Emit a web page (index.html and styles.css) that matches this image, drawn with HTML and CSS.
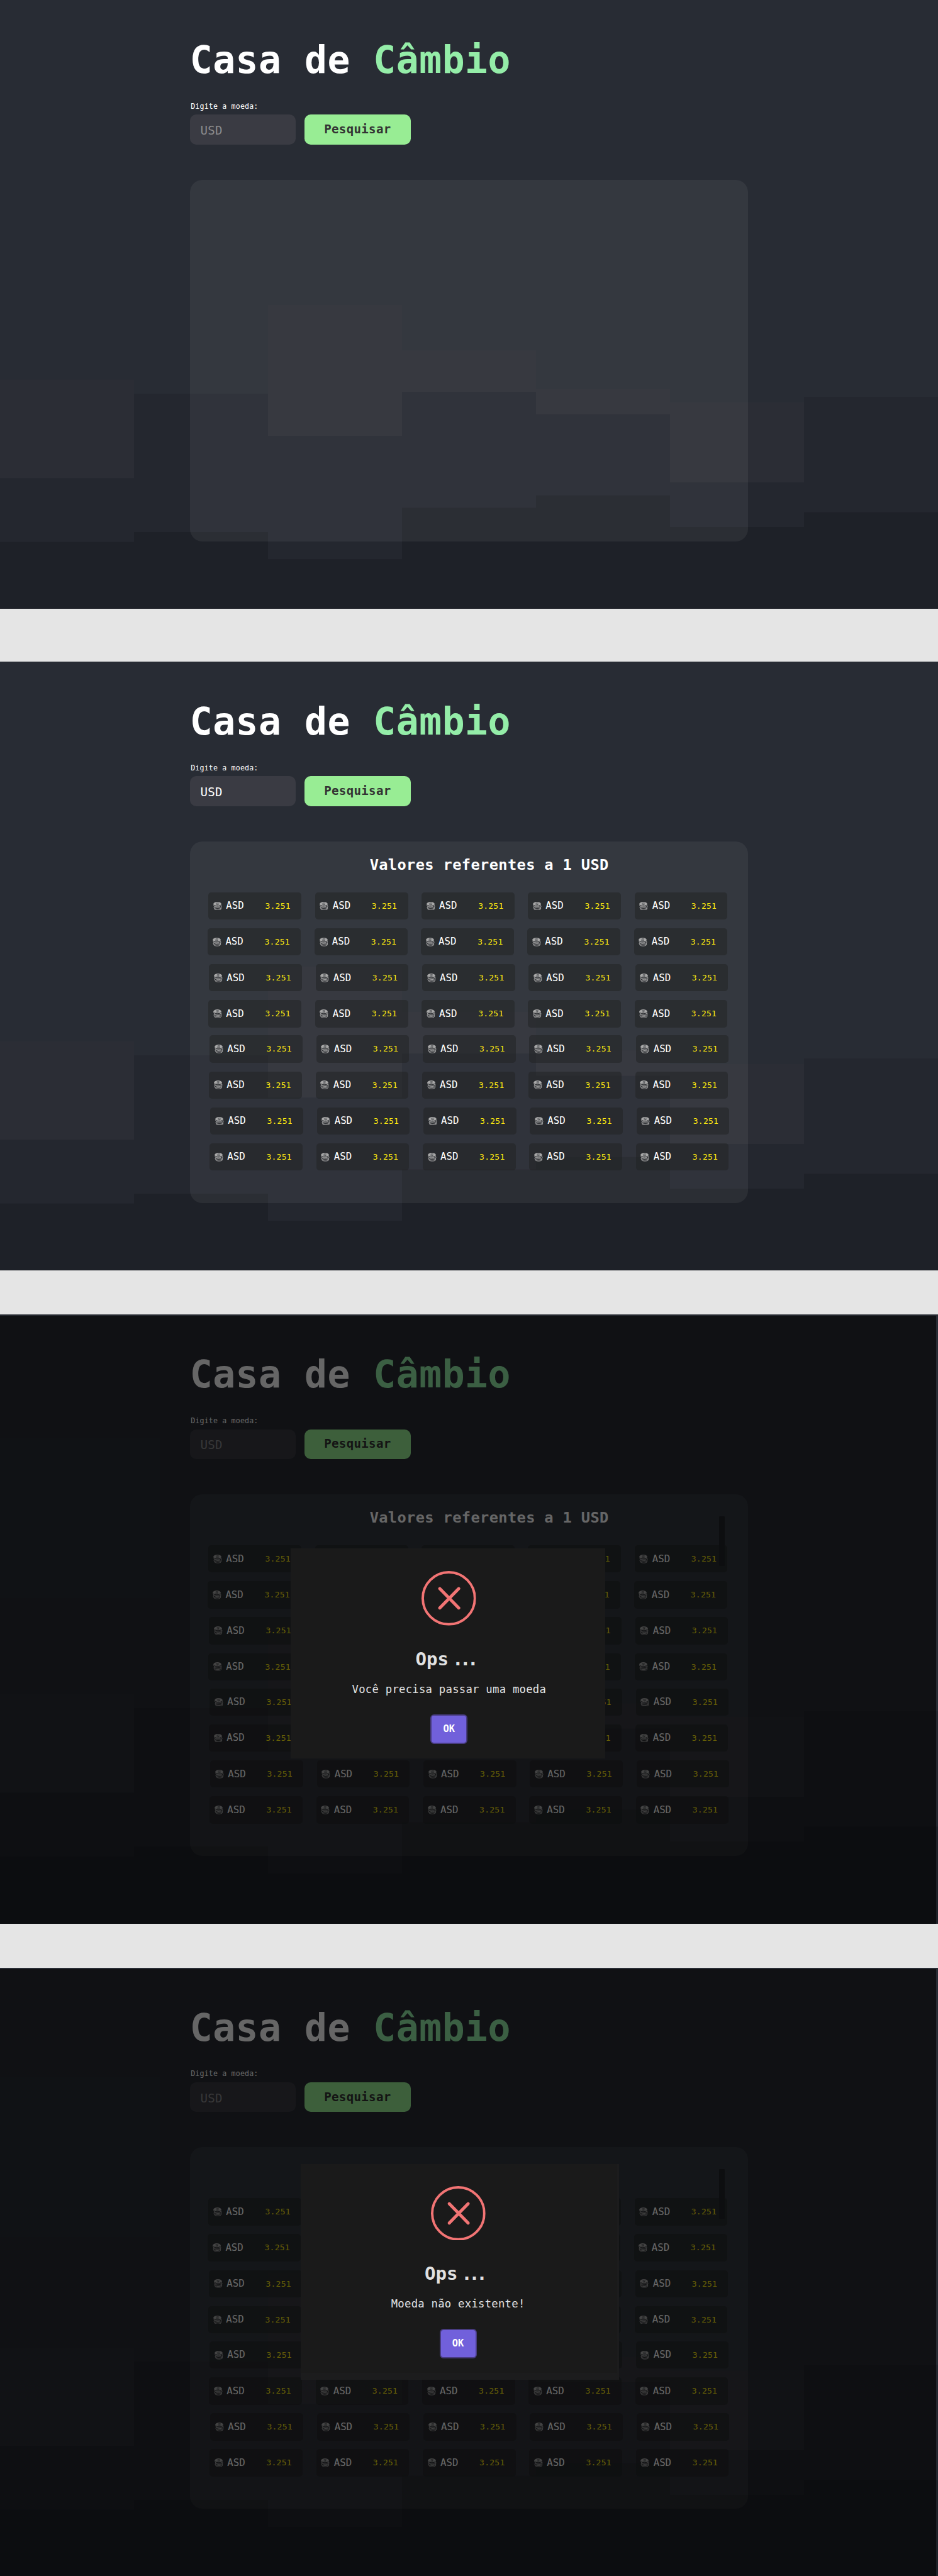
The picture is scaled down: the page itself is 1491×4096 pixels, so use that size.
FILE: index.html
```html
<!DOCTYPE html>
<html lang="pt-BR">
<head>
<meta charset="utf-8">
<title>Casa de Câmbio</title>
<link rel="stylesheet" href="styles.css">
</head>
<body>
<svg class="defs" aria-hidden="true">
  <symbol id="steps" viewBox="0 0 1512 982" preserveAspectRatio="none">
    <path fill="#2b2d35" d="M0 612H216V635H432V492H648V565H864V627H1080V649H1296V982H0Z"/>
    <path fill="#24272f" d="M0 771H216V635H432V703H648V632H864V668H1080V778H1296V640H1512V982H0Z"/>
    <path fill="#1e2128" d="M0 874H216V858H432V902H648V819H864V799H1080V850H1296V826H1512V982H0Z"/>
  </symbol>
  <symbol id="coins" viewBox="0 0 14 14">
    <g fill="#2b2d31" stroke="#a8a8a8" stroke-width="1">
      <ellipse cx="7.3" cy="11" rx="5.6" ry="2.5"/>
      <ellipse cx="7" cy="9.2" rx="6" ry="2.5"/>
      <ellipse cx="7.6" cy="7.2" rx="5.8" ry="2.5"/>
      <ellipse cx="6.6" cy="5.3" rx="5.9" ry="2.6"/>
    </g>
    <ellipse cx="6.6" cy="3.2" rx="6.3" ry="3.1" fill="#a8a8a8"/>
    <path d="M9 2.1C7.6 1.3 4.8 1.5 4.9 2.5C5 3.5 8.7 3 8.7 4.1C8.7 5.1 5.8 5.2 4.4 4.4" fill="none" stroke="#3a3c40" stroke-width="0.8"/>
  </symbol>
  <symbol id="error" viewBox="0 0 88 88">
    <g fill="none" stroke="#f27474">
      <circle cx="44" cy="44" r="42" stroke-width="4"/>
      <path d="M29.5 28.5L60 59.5M60 28.5L29.5 59.5" stroke-width="5" stroke-linecap="round"/>
    </g>
  </symbol>
</svg>

<main class="board">
  <section class="screen">
    <svg class="screen__steps"><use href="#steps"/></svg>
    <div class="content">
      <h1 class="title">Casa de <span class="title__accent">Câmbio</span></h1>
      <label class="label">Digite a moeda:</label>
      <form class="search">
        <input class="search__input" type="text" placeholder="USD">
        <button class="search__button" type="button">Pesquisar</button>
      </form>
      <div class="panel"></div>
    </div>
  </section>

  <section class="screen screen--results">
    <svg class="screen__steps"><use href="#steps"/></svg>
    <div class="content">
      <h1 class="title">Casa de <span class="title__accent">Câmbio</span></h1>
      <label class="label">Digite a moeda:</label>
      <form class="search">
        <input class="search__input" type="text" value="USD">
        <button class="search__button" type="button">Pesquisar</button>
      </form>
      <div class="panel">
        <h2 class="panel__title">Valores referentes a 1 USD</h2>
        <div class="rates"></div>
      </div>
    </div>
  </section>

  <section class="screen screen--empty">
    <svg class="screen__steps"><use href="#steps"/></svg>
    <div class="content">
      <h1 class="title">Casa de <span class="title__accent">Câmbio</span></h1>
      <label class="label">Digite a moeda:</label>
      <form class="search">
        <input class="search__input" type="text" placeholder="USD">
        <button class="search__button" type="button">Pesquisar</button>
      </form>
      <div class="panel">
        <h2 class="panel__title">Valores referentes a 1 USD</h2>
        <div class="rates" data-covered-rows="6"></div>
        <div class="panel__scrollbar"></div>
      </div>
    </div>
    <div class="overlay"></div>
    <div class="modal modal--empty">
      <svg class="modal__icon"><use href="#error"/></svg>
      <h3 class="modal__title"><span>Ops</span><span class="modal__dots">...</span></h3>
      <p class="modal__text">Você precisa passar uma moeda</p>
      <button class="modal__button" type="button">OK</button>
    </div>
  </section>

  <section class="screen screen--missing">
    <svg class="screen__steps"><use href="#steps"/></svg>
    <div class="content">
      <h1 class="title">Casa de <span class="title__accent">Câmbio</span></h1>
      <label class="label">Digite a moeda:</label>
      <form class="search">
        <input class="search__input" type="text" placeholder="USD">
        <button class="search__button" type="button">Pesquisar</button>
      </form>
      <div class="panel">
        <div class="panel__title"></div>
        <div class="rates" data-covered-rows="5"></div>
        <div class="panel__scrollbar"></div>
      </div>
    </div>
    <div class="overlay"></div>
    <div class="modal modal--missing">
      <svg class="modal__icon"><use href="#error"/></svg>
      <h3 class="modal__title"><span>Ops</span><span class="modal__dots">...</span></h3>
      <p class="modal__text">Moeda não existente!</p>
      <button class="modal__button" type="button">OK</button>
    </div>
  </section>
</main>
<script src="script.js"></script>
</body>
</html>
```
FILE: styles.css
```css
* {
  box-sizing: border-box;
  margin: 0;
  padding: 0;
}

html {
  background: #1e2128;
}

body {
  height: 4096px;
  overflow: hidden;
  font-family: "DejaVu Sans Mono", monospace;
  color: #fff;
}

.defs {
  position: absolute;
  width: 0;
  height: 0;
}

.board {
  zoom: 0.986;
  background: #e5e5e5;
}

.screen {
  position: relative;
  height: 982px;
  overflow: hidden;
  background: #282c34;
}

.screen--results {
  margin-top: 85px;
}

.screen--empty,
.screen--missing {
  margin-top: 71px;
}

.screen__steps {
  position: absolute;
  inset: 0;
  width: 100%;
  height: 100%;
}

.content {
  position: relative;
  width: 900px;
  margin-left: 306px;
  padding-top: 62px;
}

.title {
  font-size: 60.5px;
  line-height: 70px;
  letter-spacing: 0.55px;
  white-space: nowrap;
}

.title__accent {
  color: #94eda8;
}

.label {
  display: block;
  margin: 33px 0 6px 1.5px;
  font-size: 11.8px;
  line-height: 14px;
  letter-spacing: 0.16px;
}

.search {
  display: flex;
  gap: 14px;
}

.search__input,
.search__button {
  width: 171px;
  height: 48px;
  border: 0;
  border-radius: 10px;
  font-family: inherit;
  font-size: 19.4px;
  letter-spacing: 0.32px;
}

.search__input {
  padding: 3px 16px 0 17px;
  background: #3a3b43;
  color: #fff;
}

.search__input::placeholder {
  color: #8b8b8d;
  opacity: 1;
}

.search__button {
  padding-bottom: 1px;
  background: #98ed94;
  color: #333;
  font-weight: 700;
}

.panel {
  position: relative;
  height: 583px;
  margin-top: 57px;
  padding-top: 23px;
  border-radius: 20px;
  background: rgba(255, 255, 255, 0.06);
}

.panel__title {
  height: 30px;
  margin-left: 290px;
  font-size: 24px;
  line-height: 30px;
  letter-spacing: 0.38px;
  white-space: nowrap;
}

.panel__scrollbar {
  position: absolute;
  top: 35px;
  right: 38px;
  width: 9px;
  height: 80px;
  border-radius: 1px;
  background: #222528;
}

.rates {
  display: flex;
  flex-direction: column;
  gap: 14px;
  margin: 29px 0 0 30px;
}

.rates__row {
  display: grid;
  grid-template-columns: repeat(5, 150px);
  column-gap: 21.75px;
}

.rates__row:nth-child(2) {
  margin-left: -1px;
}

.rates__row:nth-child(3),
.rates__row:nth-child(6) {
  margin-left: 1px;
}

.rates__row:nth-child(5) {
  margin: -1px 0 0 2px;
}

.rates__row:nth-child(7) {
  margin-left: 3px;
}

.rates__row:nth-child(8) {
  margin-left: 2px;
}

.rate {
  display: flex;
  align-items: center;
  height: 44px;
  padding-left: 8px;
  border-radius: 5px;
  background: rgba(31, 33, 34, 0.5);
}

.rate__icon {
  width: 14px;
  height: 14px;
}

.rate__code {
  width: 63px;
  margin-left: 6.5px;
  font-size: 16px;
  line-height: 43px;
}

.rate__value {
  font-size: 13.2px;
  line-height: 44px;
  letter-spacing: 0.25px;
  color: #ffeb0f;
}

.overlay {
  position: absolute;
  inset: 2px 3px 0 0;
  background: rgba(0, 0, 0, 0.6);
}

.modal {
  position: absolute;
  display: flex;
  flex-direction: column;
  align-items: center;
  background: #1a1a1a;
  color: #e1e1e1;
}

.modal--empty {
  top: 377px;
  left: 469px;
  width: 507px;
  height: 339px;
  padding: 37px 0 0 3px;
  border-bottom: 2px solid #1c1c1c;
}

.modal--missing {
  top: 317px;
  left: 485px;
  width: 513px;
  height: 348px;
  padding: 35px 3px 0 0;
  border: solid #1c1c1d;
  border-width: 0 4px 12px 0;
}

.modal__icon {
  flex: none;
  width: 88px;
  height: 88px;
}

.modal__title {
  display: flex;
  gap: 6px;
  width: 108px;
  margin-top: 34px;
  font-size: 29.5px;
  line-height: 40px;
  white-space: nowrap;
}

.modal__dots {
  letter-spacing: -5.6px;
}

.modal__text {
  margin-top: 17px;
  font-size: 17.5px;
  line-height: 24px;
  letter-spacing: 0.26px;
  white-space: nowrap;
}

.modal__button {
  width: 60px;
  height: 47px;
  margin-top: 28px;
  border: 3px solid #483c80;
  border-radius: 6px;
  background: #7160db;
  color: #fff;
  font-family: inherit;
  font-size: 15.6px;
  font-weight: 700;
}
```
FILE: script.js
```js
const ROWS = 8;
const COLUMNS = 5;

const content = `
    <svg class="rate__icon"><use href="#coins"/></svg>
    <span class="rate__code">ASD</span>
    <span class="rate__value">3.251</span>`;

// Cards that lie wholly behind an open modal keep their box but have no content.
function isCovered(row, column, coveredRows) {
  const lastColumn = coveredRows === 5 ? 3 : 2;
  return row < coveredRows && column >= 1 && column <= lastColumn;
}

document.querySelectorAll('.rates').forEach((rates) => {
  const coveredRows = Number(rates.dataset.coveredRows || 0);
  let html = '';
  for (let row = 0; row < ROWS; row += 1) {
    html += '<div class="rates__row">';
    for (let column = 0; column < COLUMNS; column += 1) {
      html += `<div class="rate">${isCovered(row, column, coveredRows) ? '' : content}</div>`;
    }
    html += '</div>';
  }
  rates.innerHTML = html;
});
```
